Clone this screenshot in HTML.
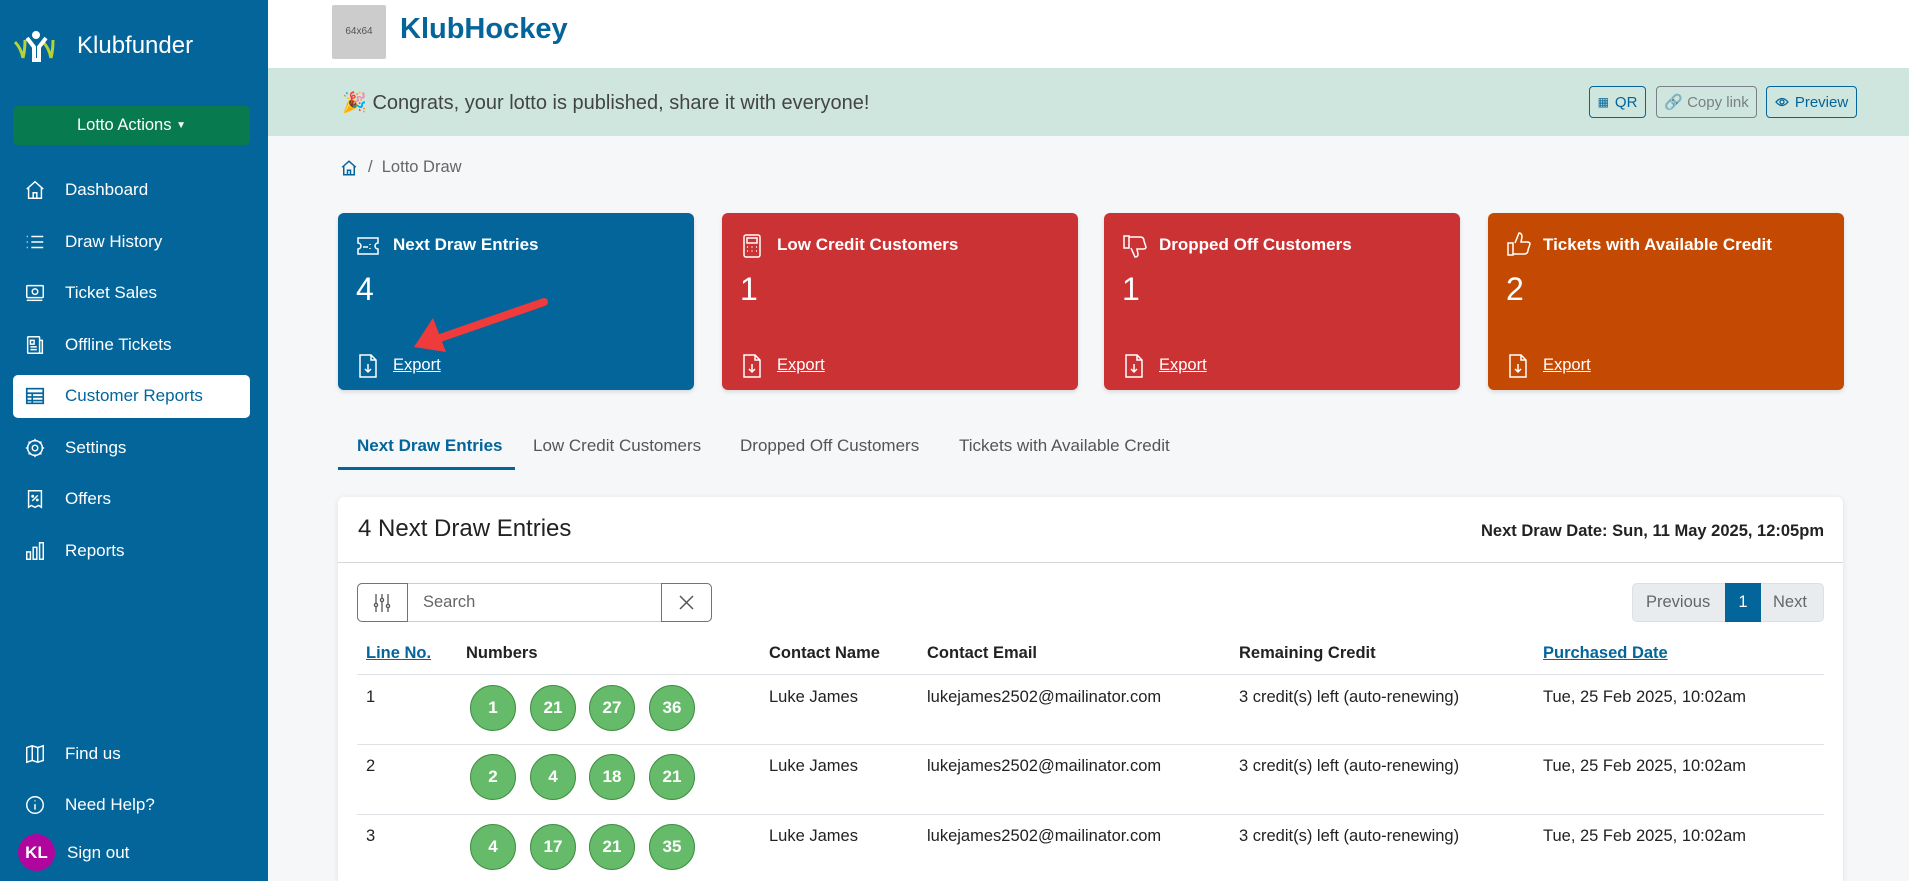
<!DOCTYPE html>
<html style="overflow:hidden;width:1909px;height:881px"><head><meta charset="utf-8"><style>
*{box-sizing:border-box;margin:0;padding:0}
body{width:1909px;height:881px;overflow:hidden;background:#f6f7f9;font-family:"Liberation Sans",sans-serif;position:relative;color:#222}
.a{position:absolute}
#sb{left:0;top:0;width:268px;height:881px;background:#03659a}
.nav{position:absolute;left:0;width:268px;height:40px;display:flex;align-items:center;color:#fff;font-size:17px}
.nav svg{position:absolute;left:24px;width:22px;height:22px}
.nav span{position:absolute;left:65px}
.card{position:absolute;top:213px;width:356px;height:177px;border-radius:6px;color:#fff;box-shadow:0 2px 4px rgba(0,0,0,.12)}
.card .t{position:absolute;left:55px;top:22px;font-size:17px;font-weight:bold}
.card .n{position:absolute;left:18px;top:58px;font-size:32px}
.card .e{position:absolute;left:55px;top:143px;font-size:16.5px;text-decoration:underline}
.card svg{position:absolute;stroke:#fff;fill:none;stroke-width:1.5}
.tab{position:absolute;top:436px;font-size:17px;color:#555}
.th{position:absolute;top:644px;font-size:16.5px;font-weight:bold;color:#222}
.td{position:absolute;font-size:16.5px;color:#222}
.ball{position:absolute;width:46px;height:46px;border-radius:50%;background:#66bb6a;border:1px solid #3f8f42;color:#fff;font-weight:bold;font-size:17px;text-align:center;line-height:44px}
.hl{position:absolute;left:357px;width:1467px;height:1px;background:#dee2e6}
.btn{position:absolute;top:86px;height:32px;border:1.5px solid #03659a;border-radius:4px;color:#03659a;font-size:15px;display:flex;align-items:center;justify-content:center;gap:6px}
</style></head><body>
<div id="sb" class="a">
 <svg class="a" style="left:13px;top:30px" width="46" height="32" viewBox="0 0 46 32"><path d="M2 12 Q8 18 10 28 M12 10 Q12 20 10 28" stroke="#b5d334" stroke-width="3" fill="none"/><path d="M34 12 Q40 18 42 28 M44 10 Q44 20 42 28" stroke="#b5d334" stroke-width="3" fill="none" transform="translate(-4 0)"/><circle cx="23" cy="5" r="4" fill="#fff"/><path d="M14 8 L21 17 L21 30 L26 30 L26 17 L33 8" stroke="#fff" stroke-width="4" fill="none"/></svg>
 <div class="a" style="left:77px;top:32px;color:#fff;font-size:24px">Klubfunder</div>
 <div class="a" style="left:13px;top:106px;width:237px;height:39px;background:#087a50;border-radius:5px;color:#fff;font-size:16.5px;display:flex;align-items:center;justify-content:center">Lotto Actions&nbsp;<span style="font-size:10px">▼</span></div>
 <div class="a" style="left:13px;top:375px;width:237px;height:43px;background:#fff;border-radius:5px"></div>
 <div class="nav" style="top:170px"><svg viewBox="0 0 24 24" fill="none" stroke="#fff" stroke-width="1.6"><path d="M3 11 L12 3 L21 11 M5 9 V21 H19 V9 M10 21 V15 H14 V21"/></svg><span>Dashboard</span></div>
 <div class="nav" style="top:222px"><svg viewBox="0 0 24 24" fill="none" stroke="#fff" stroke-width="1.6"><path d="M8 6H21M8 12H21M8 18H21M3 6h1M3 12h1M3 18h1"/></svg><span>Draw History</span></div>
 <div class="nav" style="top:273px"><svg viewBox="0 0 24 24" fill="none" stroke="#fff" stroke-width="1.6"><rect x="3" y="4" width="18" height="13" rx="1"/><circle cx="12" cy="10.5" r="3"/><path d="M3 20 H20"/></svg><span>Ticket Sales</span></div>
 <div class="nav" style="top:325px"><svg viewBox="0 0 24 24" fill="none" stroke="#fff" stroke-width="1.6"><rect x="4" y="3" width="13" height="18" rx="1"/><path d="M17 7 H20 V21 H8 M7 7 H11 V11 H7Z M7 14 H14 M7 17 H14"/></svg><span>Offline Tickets</span></div>
 <div class="nav" style="top:376px;color:#03659a"><svg viewBox="0 0 24 24" fill="none" stroke="#03659a" stroke-width="1.8"><rect x="3" y="4" width="18" height="16"/><path d="M3 9H21M3 13H21M3 17H21M9 9V20"/></svg><span>Customer Reports</span></div>
 <div class="nav" style="top:428px"><svg viewBox="0 0 24 24" fill="none" stroke="#fff" stroke-width="1.6"><circle cx="12" cy="12" r="8"/><circle cx="12" cy="12" r="3"/><path d="M12 2v3M12 19v3M2 12h3M19 12h3M5 5l2 2M17 17l2 2M5 19l2-2M17 7l2-2"/></svg><span>Settings</span></div>
 <div class="nav" style="top:479px"><svg viewBox="0 0 24 24" fill="none" stroke="#fff" stroke-width="1.6"><path d="M5 3H19V21L16 19L12 21L8 19L5 21Z M9 14L15 8"/><circle cx="9.5" cy="9" r=".8"/><circle cx="14.5" cy="13" r=".8"/></svg><span>Offers</span></div>
 <div class="nav" style="top:531px"><svg viewBox="0 0 24 24" fill="none" stroke="#fff" stroke-width="1.6"><rect x="3" y="13" width="4" height="8"/><rect x="10" y="8" width="4" height="13"/><rect x="17" y="3" width="4" height="18"/></svg><span>Reports</span></div>
 <div class="nav" style="top:734px"><svg viewBox="0 0 24 24" fill="none" stroke="#fff" stroke-width="1.6"><path d="M3 5 L9 3 L15 5 L21 3 V19 L15 21 L9 19 L3 21Z M9 3V19M15 5V21"/></svg><span>Find us</span></div>
 <div class="nav" style="top:785px"><svg viewBox="0 0 24 24" fill="none" stroke="#fff" stroke-width="1.6"><circle cx="12" cy="12" r="9"/><path d="M12 11V17M12 7v1"/></svg><span>Need Help?</span></div>
 <div class="a" style="left:18px;top:834px;width:37px;height:37px;border-radius:50%;background:#b0069e;color:#fff;font-weight:bold;font-size:17px;text-align:center;line-height:37px">KL</div>
 <div class="a" style="left:67px;top:843px;color:#fff;font-size:17px">Sign out</div>
</div>
<div class="a" style="left:268px;top:0;width:1641px;height:68px;background:#fff"></div>
<div class="a" style="left:332px;top:5px;width:54px;height:54px;background:#ccc;border-radius:2px;font-size:10px;color:#555;text-align:center;line-height:54px">64x64</div>
<div class="a" style="left:400px;top:13px;font-size:29px;font-weight:bold;color:#04659b">KlubHockey</div>
<div class="a" style="left:268px;top:68px;width:1641px;height:68px;background:#cee6dd"></div>
<div class="a" style="left:342px;top:90px;font-size:20px;color:#444">🎉 Congrats, your lotto is published, share it with everyone!</div>
<div class="btn" style="left:1589px;width:57px"><span style="font-size:12px">▦</span>QR</div>
<div class="btn" style="left:1656px;width:101px;border-color:#7a8086;color:#7a8086">🔗 Copy link</div>
<div class="btn" style="left:1766px;width:91px"><svg width="14" height="12" viewBox="0 0 14 12" fill="none" stroke="#03659a" stroke-width="1.3"><path d="M1 6 Q7 -1 13 6 Q7 13 1 6Z"/><circle cx="7" cy="6" r="2"/></svg>Preview</div>
<svg class="a" style="left:340px;top:159px" width="18" height="18" viewBox="0 0 24 24" fill="none" stroke="#03659a" stroke-width="2"><path d="M3 11 L12 3 L21 11 M5 9 V21 H19 V9 M10 21 V15 H14 V21"/></svg>
<div class="a" style="left:368px;top:158px;font-size:16.5px;color:#666">/&nbsp;&nbsp;Lotto Draw</div>

<div class="card" style="left:338px;background:#03659a">
 <svg style="left:18px;top:22px" width="24" height="22" viewBox="0 0 24 22"><path d="M2 3H22V8A3 3 0 0 0 22 14V19H2V14A3 3 0 0 0 2 8Z M7 12H12M14 9V10M14 13V14"/></svg>
 <div class="t">Next Draw Entries</div><div class="n">4</div>
 <svg style="left:20px;top:140px" width="20" height="26" viewBox="0 0 20 26"><path d="M2 2H13L18 7V24H2Z M13 2V7H18 M10 11V19M7 16L10 19L13 16"/></svg><div class="e">Export</div></div>
<div class="card" style="left:722px;background:#cb3234">
 <svg style="left:20px;top:20px" width="20" height="26" viewBox="0 0 20 26"><rect x="2" y="2" width="16" height="22" rx="2"/><path d="M5 5H15V10H5Z M5 14h1M9.5 14h1M14 14h1M5 18h1M9.5 18h1M14 18h1"/></svg>
 <div class="t">Low Credit Customers</div><div class="n">1</div>
 <svg style="left:20px;top:140px" width="20" height="26" viewBox="0 0 20 26"><path d="M2 2H13L18 7V24H2Z M13 2V7H18 M10 11V19M7 16L10 19L13 16"/></svg><div class="e">Export</div></div>
<div class="card" style="left:1104px;background:#cb3234">
 <svg style="left:18px;top:20px" width="26" height="26" viewBox="0 0 26 26"><path d="M2 3H7V15H2Z M7 4H18Q22 4 22 8L24 14Q24 16 21 16H15L16 21Q16 24 13 24L9 15"/></svg>
 <div class="t">Dropped Off Customers</div><div class="n">1</div>
 <svg style="left:20px;top:140px" width="20" height="26" viewBox="0 0 20 26"><path d="M2 2H13L18 7V24H2Z M13 2V7H18 M10 11V19M7 16L10 19L13 16"/></svg><div class="e">Export</div></div>
<div class="card" style="left:1488px;background:#c44a03">
 <svg style="left:18px;top:18px" width="26" height="26" viewBox="0 0 26 26"><path d="M2 12H7V24H2Z M7 23H18Q22 23 22 19L24 13Q24 11 21 11H15L16 6Q16 2 13 2L9 12"/></svg>
 <div class="t">Tickets with Available Credit</div><div class="n">2</div>
 <svg style="left:20px;top:140px" width="20" height="26" viewBox="0 0 20 26"><path d="M2 2H13L18 7V24H2Z M13 2V7H18 M10 11V19M7 16L10 19L13 16"/></svg><div class="e">Export</div></div>

<svg class="a" style="left:400px;top:290px" width="160" height="70" viewBox="0 0 160 70"><path d="M144 12 L40 48" stroke="#ef3b3b" stroke-width="8" stroke-linecap="round"/><path d="M14 57 L33 28 L46 62Z" fill="#ef3b3b"/></svg>

<div class="tab" style="left:357px;color:#03659a;font-weight:bold">Next Draw Entries</div>
<div class="tab" style="left:533px">Low Credit Customers</div>
<div class="tab" style="left:740px">Dropped Off Customers</div>
<div class="tab" style="left:959px">Tickets with Available Credit</div>
<div class="a" style="left:338px;top:467px;width:177px;height:3px;background:#03659a"></div>

<div class="a" style="left:338px;top:497px;width:1505px;height:384px;background:#fff;border-radius:6px 6px 0 0;box-shadow:0 1px 6px rgba(0,0,0,.1)"></div>
<div class="a" style="left:358px;top:515px;font-size:24px;color:#222">4 Next Draw Entries</div>
<div class="a" style="right:85px;top:522px;font-size:16.5px;font-weight:bold;color:#222">Next Draw Date: Sun, 11 May 2025, 12:05pm</div>
<div class="a" style="left:338px;top:562px;width:1505px;height:1px;background:#d6d9dc"></div>

<div class="a" style="left:357px;top:583px;width:355px;height:39px;border:1px solid #ccc;border-radius:5px"></div>
<div class="a" style="left:357px;top:583px;width:51px;height:39px;border:1px solid #6c757d;border-radius:5px 0 0 5px"></div>
<svg class="a" style="left:373px;top:593px" width="18" height="20" viewBox="0 0 18 20" fill="none" stroke="#555" stroke-width="1.3"><path d="M3 1V19M9 1V19M15 1V19"/><circle cx="3" cy="12" r="1.6" fill="#fff"/><circle cx="9" cy="7" r="1.6" fill="#fff"/><circle cx="15" cy="13" r="1.6" fill="#fff"/></svg>
<div class="a" style="left:423px;top:593px;font-size:16.5px;color:#666">Search</div>
<div class="a" style="left:661px;top:583px;width:51px;height:39px;border:1px solid #6c757d;border-radius:0 5px 5px 0"></div>
<svg class="a" style="left:679px;top:595px" width="15" height="15" viewBox="0 0 15 15" stroke="#555" stroke-width="1.5"><path d="M1 1L14 14M14 1L1 14"/></svg>

<div class="a" style="left:1632px;top:583px;width:192px;height:39px;background:#e9ecef;border:1px solid #dde0e3;border-radius:5px"></div>
<div class="a" style="left:1646px;top:593px;font-size:16.5px;color:#666">Previous</div>
<div class="a" style="left:1725px;top:583px;width:36px;height:39px;background:#03659a;color:#fff;font-size:16.5px;text-align:center;line-height:39px">1</div>
<div class="a" style="left:1773px;top:593px;font-size:16.5px;color:#666">Next</div>

<div class="th" style="left:366px;color:#03659a;text-decoration:underline">Line No.</div>
<div class="th" style="left:466px">Numbers</div>
<div class="th" style="left:769px">Contact Name</div>
<div class="th" style="left:927px">Contact Email</div>
<div class="th" style="left:1239px">Remaining Credit</div>
<div class="th" style="left:1543px;color:#03659a;text-decoration:underline">Purchased Date</div>
<div class="hl" style="top:674px"></div>
<div class="hl" style="top:744px"></div>
<div class="hl" style="top:814px"></div>

<div class="td" style="left:366px;top:688px">1</div>
<div class="ball" style="left:470px;top:685px">1</div><div class="ball" style="left:530px;top:685px">21</div><div class="ball" style="left:589px;top:685px">27</div><div class="ball" style="left:649px;top:685px">36</div>
<div class="td" style="left:769px;top:688px">Luke James</div><div class="td" style="left:927px;top:688px">lukejames2502@mailinator.com</div><div class="td" style="left:1239px;top:688px">3 credit(s) left (auto-renewing)</div><div class="td" style="left:1543px;top:688px">Tue, 25 Feb 2025, 10:02am</div>

<div class="td" style="left:366px;top:757px">2</div>
<div class="ball" style="left:470px;top:754px">2</div><div class="ball" style="left:530px;top:754px">4</div><div class="ball" style="left:589px;top:754px">18</div><div class="ball" style="left:649px;top:754px">21</div>
<div class="td" style="left:769px;top:757px">Luke James</div><div class="td" style="left:927px;top:757px">lukejames2502@mailinator.com</div><div class="td" style="left:1239px;top:757px">3 credit(s) left (auto-renewing)</div><div class="td" style="left:1543px;top:757px">Tue, 25 Feb 2025, 10:02am</div>

<div class="td" style="left:366px;top:827px">3</div>
<div class="ball" style="left:470px;top:824px">4</div><div class="ball" style="left:530px;top:824px">17</div><div class="ball" style="left:589px;top:824px">21</div><div class="ball" style="left:649px;top:824px">35</div>
<div class="td" style="left:769px;top:827px">Luke James</div><div class="td" style="left:927px;top:827px">lukejames2502@mailinator.com</div><div class="td" style="left:1239px;top:827px">3 credit(s) left (auto-renewing)</div><div class="td" style="left:1543px;top:827px">Tue, 25 Feb 2025, 10:02am</div>
</body></html>
